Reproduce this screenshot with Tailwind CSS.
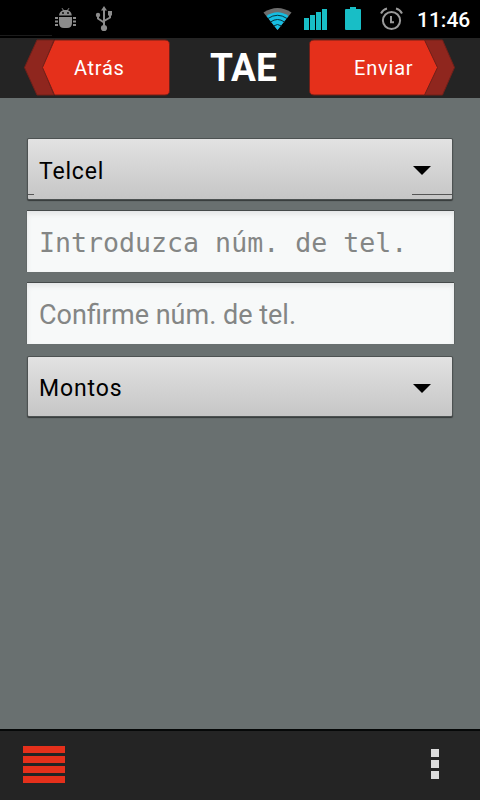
<!DOCTYPE html>
<html lang="es">
<head>
<meta charset="utf-8">
<title>TAE</title>
<script src="https://cdn.jsdelivr.net/npm/@tailwindcss/browser@4"></script>
</head>
<body class="w-[480px] h-[800px] overflow-hidden flex flex-col font-[Roboto,sans-serif] bg-[#697070]">
  <!-- Status bar -->
  <div class="h-[38px] shrink-0 bg-black flex flex-col">
    <div class="h-[35px] flex items-start">
      <svg class="w-[240px] h-[35px]" viewBox="0 0 240 35" fill="none">
        <g fill="#8c8c8c">
          <path d="M59 15.500C59.300 12.800 61 11 63 10.300L61.500 8.300L62.200 7.900L63.900 10H67.100L68.800 7.900L69.500 8.300L68 10.300C70 11 71.500 12.800 71.800 15.500Z"/>
          <path d="M59 17H72V23Q72 28 67 28H64Q59 28 59 23Z"/>
          <path d="M55 17h3v2h-3zM55 20.500h3v2h-3zM55 24h3v2h-3zM73 17h3v2h-3zM73 20.500h3v2h-3zM73 24h3v2h-3z"/>
          <circle cx="104" cy="28" r="3.100"/><path d="M101 10.500L104 6L107 10.500Z"/>
          <circle cx="98" cy="15" r="2.200"/><rect x="108" y="11" width="4" height="4.500"/>
        </g>
        <circle cx="63" cy="13" r=".9" fill="#000"/><circle cx="68" cy="13" r=".9" fill="#000"/>
        <path d="M104 9V28M98 15V18.500L104 22.500M110 14V17.500L104 21" stroke="#8c8c8c" stroke-width="2"/>
      </svg>
      <svg class="w-[170px] h-[35px]" viewBox="240 0 170 35" fill="none">
        <path d="M277.500 30L263.500 12.500Q277.500 3.500 291.500 12.500Z" fill="#6d6d6d"/>
        <path d="M277.500 30L266.500 16Q277.500 8.500 288.500 16Z" fill="#16bde2"/>
        <path d="M268 18.500Q277.500 12 287 18.500M270.500 22Q277.500 17 284.500 22M273.500 26Q277.500 23 281.500 26" stroke="#07313a" stroke-width="1"/>
        <path d="M304 18h5v12h-5zM310 15h5v15h-5zM316 12h5v18h-5zM322 9h5v21h-5z" fill="#18bec6"/>
        <path d="M350 7h6v2h4q1 0 1 1v19q0 1-1 1h-14q-1 0-1-1V10q0-1 1-1h4z" fill="#18bec6"/>
        <g stroke="#9a9a9a" stroke-width="2">
          <circle cx="391.500" cy="20.500" r="8.600"/><path d="M391 16V22.300H394M381 13.500Q383 9.500 387 8.500M396 8.500Q400 9.500 402 13.500"/>
        </g>
      </svg>
      <div class="pt-[8px] pl-[7px] text-[21px] leading-6 font-medium text-white whitespace-nowrap">11:46</div>
    </div>
    <div class="w-[52px] h-px bg-[#1c1c1c]"></div>
  </div>

  <!-- Title bar -->
  <header class="h-[60px] shrink-0 bg-[#242424] flex">
    <div class="w-[170px] h-[60px] grid">
      <svg class="[grid-area:1/1] w-[172px] h-[60px]" viewBox="0 38 172 60" stroke="#702019" stroke-width="1">
        <path d="M37 40H54L43 67.500L54 95H37L24.500 67.500Z" fill="#8f261e"/>
        <path d="M54.500 40H165Q169.500 40 169.500 44.500V90.500Q169.500 95 165 95H54.500L42.500 67.500Z" fill="#e5301b"/>
      </svg>
      <span class="[grid-area:1/1] pl-[74px] pt-[18px] text-[20px] leading-6 tracking-[0.7px] text-white">Atrás</span>
    </div>
    <h1 class="w-[139px] pl-[40px] pt-[9px] text-[39px] leading-[42px] font-bold text-white whitespace-nowrap"><span class="inline-block origin-left scale-x-[.95]">TAE</span></h1>
    <div class="w-[171px] h-[60px] grid">
      <svg class="[grid-area:1/1] w-[171px] h-[60px]" viewBox="309 38 171 60" stroke="#702019" stroke-width="1">
        <path d="M424 40H442.500L454.500 67.500L442.500 95H424L437 67.500Z" fill="#8f261e"/>
        <path d="M314 40H424.500L437.500 67.500L424.500 95H314Q309.500 95 309.500 90.500V44.500Q309.500 40 314 40Z" fill="#e5301b"/>
      </svg>
      <span class="[grid-area:1/1] pl-[45px] pt-[18px] text-[20px] leading-6 tracking-[0.8px] text-white">Enviar</span>
    </div>
  </header>

  <!-- Form -->
  <main class="flex-1 flex flex-col pt-[41px] px-[26px] bg-[#697070]">
    <div class="ml-[2px] w-[424px] h-[60px] shrink-0 rounded-[1px] bg-linear-to-b from-[#e2e2e2] to-[#c6c6c6] shadow-[0_0_0_1px_#4d5252,0_1px_1px_1px_#353939] flex flex-col">
      <div class="h-[55px] shrink-0 flex items-center justify-between pl-[11px] pr-[21px] pt-[8px] text-[23px] tracking-[0.8px] text-black">
        <span class="pt-[4px]">Telcel</span>
        <svg class="w-[18px] h-[9px]" viewBox="0 0 18 9"><path d="M0 0H18L9 9Z"/></svg>
      </div>
      <div class="h-px flex justify-between"><span class="w-[6px] bg-[#555]"></span><span class="w-[40px] bg-[#555]"></span></div>
    </div>
    <div class="mt-[12px] ml-[1px] w-[427px] h-[61px] shrink-0 bg-[#f7f9f9] shadow-[0_-1px_0_#454a4a,1px_0_0_#5c6262,-1px_0_0_#626868,inset_0_3px_5px_#e3e5e6] pl-[12px] pt-[16px] font-['DejaVu_Sans_Mono',monospace] text-[26.600px] leading-8 text-[#848685] whitespace-pre">Introduzca núm. de tel.</div>
    <div class="mt-[11px] ml-[1px] w-[427px] h-[61px] shrink-0 bg-[#f7f9f9] shadow-[0_-1px_0_#454a4a,1px_0_0_#5c6262,-1px_0_0_#626868,inset_0_3px_5px_#e3e5e6] pl-[12px] pt-[16px] text-[27px] leading-8 text-[#848685] whitespace-pre">Confirme núm. de tel.</div>
    <div class="mt-[13px] ml-[2px] w-[424px] h-[59px] shrink-0 rounded-[1px] bg-linear-to-b from-[#e2e2e2] to-[#c6c6c6] shadow-[0_0_0_1px_#4d5252,0_1px_1px_1px_#353939] flex items-center justify-between pl-[11px] pr-[21px] pt-[4px] text-[23px] tracking-[0.9px] text-black">
      <span class="pt-[2px]">Montos</span>
      <svg class="w-[18px] h-[9px]" viewBox="0 0 18 9"><path d="M0 0H18L9 9Z"/></svg>
    </div>
  </main>

  <!-- Bottom bar -->
  <footer class="h-[71px] shrink-0 bg-[#242424] border-t-2 border-[#060808] flex items-start justify-between pl-[23px] pr-[41px] pt-[15px]">
    <div class="flex flex-col gap-[3px]">
      <span class="w-[42px] h-[7px] bg-[#e5301b]"></span>
      <span class="w-[42px] h-[7px] bg-[#e5301b]"></span>
      <span class="w-[42px] h-[7px] bg-[#e5301b]"></span>
      <span class="w-[42px] h-[7px] bg-[#e5301b]"></span>
    </div>
    <div class="flex flex-col gap-[3px] pt-[3px]">
      <span class="w-[8px] h-[8px] bg-[#dcdcdc]"></span>
      <span class="w-[8px] h-[8px] bg-[#dcdcdc]"></span>
      <span class="w-[8px] h-[8px] bg-[#dcdcdc]"></span>
    </div>
  </footer>
</body>
</html>
